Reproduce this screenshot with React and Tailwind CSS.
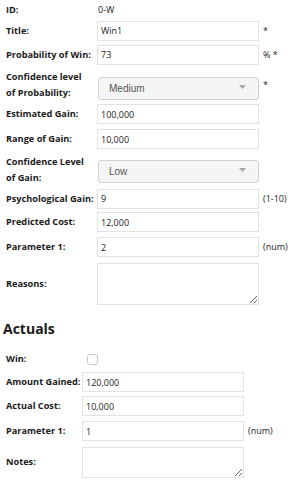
import { useState } from "react";

const labelCls = "whitespace-nowrap font-bold text-[9.2px] leading-[16px] text-[#1a1a1a]";
const inputCls =
  "h-[20px] w-[162px] border border-[#e2e2e2] bg-white px-[3px] text-[9px] text-[#1a1a1a] outline-none";
const areaCls = "w-[162px] border border-[#e2e2e2] bg-white px-[3px] text-[9px] outline-none";
const noteCls = "whitespace-nowrap text-[9px] text-[#1a1a1a] pl-[2px]";

function Caret() {
  return (
    <svg width="7" height="4" viewBox="0 0 7 4" className="absolute right-[13px] top-1/2 -translate-y-1/2">
      <path d="M0 0 L7 0 L3.5 4 Z" fill="#a8a8a8" />
    </svg>
  );
}

function Select({ value, options, extra = "" }) {
  const [v, setV] = useState(value);
  return (
    <div className={"relative ml-[1px] w-[161px] " + extra}>
      <select
        value={v}
        onChange={(e) => setV(e.target.value)}
        className="h-[23px] w-full appearance-none rounded-[3px] border border-[#d2d2d2] bg-[#f5f5f5] pl-[10px] text-[10px] text-[#555] outline-none"
        style={{ fontFamily: '"Liberation Sans", Arial, sans-serif' }}
      >
        {options.map((o) => (
          <option key={o}>{o}</option>
        ))}
      </select>
      <Caret />
    </div>
  );
}

function Row({ h, label, children, note }) {
  return (
    <div className={"grid grid-cols-[89px_162px_auto] items-center gap-x-[2px] " + h}>
      <div className={labelCls}>{label}</div>
      <div className="flex items-center">{children}</div>
      <div className={noteCls}>{note}</div>
    </div>
  );
}

function Row2({ h, label, children, note }) {
  return (
    <div className={"grid grid-cols-[74px_162px_auto] items-center gap-x-[2px] " + h}>
      <div className={labelCls}>{label}</div>
      <div className="flex items-center">{children}</div>
      <div className={noteCls}>{note}</div>
    </div>
  );
}

export default function App() {
  const [form, setForm] = useState({
    title: "Win1",
    prob: "73",
    estGain: "100,000",
    range: "10,000",
    psych: "9",
    cost: "12,000",
    param: "2",
    reasons: "",
    win: false,
    gained: "120,000",
    actualCost: "10,000",
    param2: "1",
    notes: "",
  });

  function set(key) {
    return (e) => setForm({ ...form, [key]: e.target.type === "checkbox" ? e.target.checked : e.target.value });
  }

  return (
    <div className="w-[304px] bg-white pl-[6px]" style={{ fontFamily: '"Open Sans", "Noto Sans", sans-serif' }}>
      <Row h="h-[19px]" label="ID:">
        <span className="pl-[1px] text-[9px] text-[#1a1a1a]">0-W</span>
      </Row>
      <Row h="h-[23px]" label="Title:" note="*">
        <input value={form.title} onChange={set("title")} className={inputCls} />
      </Row>
      <Row h="h-[25px]" label="Probability of Win:" note="% *">
        <input value={form.prob} onChange={set("prob")} className={inputCls} />
      </Row>
      <Row
        h="h-[35px]"
        label={
          <>
            Confidence level
            <br />
            of Probability:
          </>
        }
        note="*"
      >
        <Select value="Medium" options={["Low", "Medium", "High"]} extra="mt-[5px]" />
      </Row>
      <Row h="h-[24px]" label="Estimated Gain:">
        <input value={form.estGain} onChange={set("estGain")} className={inputCls} />
      </Row>
      <Row h="h-[26px]" label="Range of Gain:">
        <input value={form.range} onChange={set("range")} className={inputCls} />
      </Row>
      <Row
        h="h-[35px]"
        label={
          <>
            Confidence Level
            <br />
            of Gain:
          </>
        }
      >
        <Select value="Low" options={["Low", "Medium", "High"]} />
      </Row>
      <Row h="h-[23px]" label="Psychological Gain:" note="(1-10)">
        <input value={form.psych} onChange={set("psych")} className={inputCls} />
      </Row>
      <Row h="h-[24px]" label="Predicted Cost:">
        <input value={form.cost} onChange={set("cost")} className={inputCls} />
      </Row>
      <Row h="h-[26px]" label="Parameter 1:" note="(num)">
        <input value={form.param} onChange={set("param")} className={inputCls} />
      </Row>
      <Row h="h-[48px]" label="Reasons:">
        <textarea value={form.reasons} onChange={set("reasons")} className={areaCls + " h-[42px]"} />
      </Row>

      <div className="flex h-[40px] items-center">
        <h2 className="-ml-[3px] text-[14px] font-bold text-[#1a1a1a]">Actuals</h2>
      </div>

      <Row2 h="h-[22px]" label="Win:">
        <input
          type="checkbox"
          checked={form.win}
          onChange={set("win")}
          className="ml-[5px] h-[11px] w-[11px] appearance-none rounded-[3px] border border-[#c8c8c8] bg-white"
        />
      </Row2>
      <Row2 h="h-[24px]" label="Amount Gained:">
        <input value={form.gained} onChange={set("gained")} className={inputCls} />
      </Row2>
      <Row2 h="h-[24px]" label="Actual Cost:">
        <input value={form.actualCost} onChange={set("actualCost")} className={inputCls} />
      </Row2>
      <Row2 h="h-[26px]" label="Parameter 1:" note="(num)">
        <input value={form.param2} onChange={set("param2")} className={inputCls} />
      </Row2>
      <Row2 h="h-[36px]" label="Notes:">
        <textarea value={form.notes} onChange={set("notes")} className={areaCls + " h-[31px]"} />
      </Row2>
      <div className="h-[22px]" />
    </div>
  );
}
